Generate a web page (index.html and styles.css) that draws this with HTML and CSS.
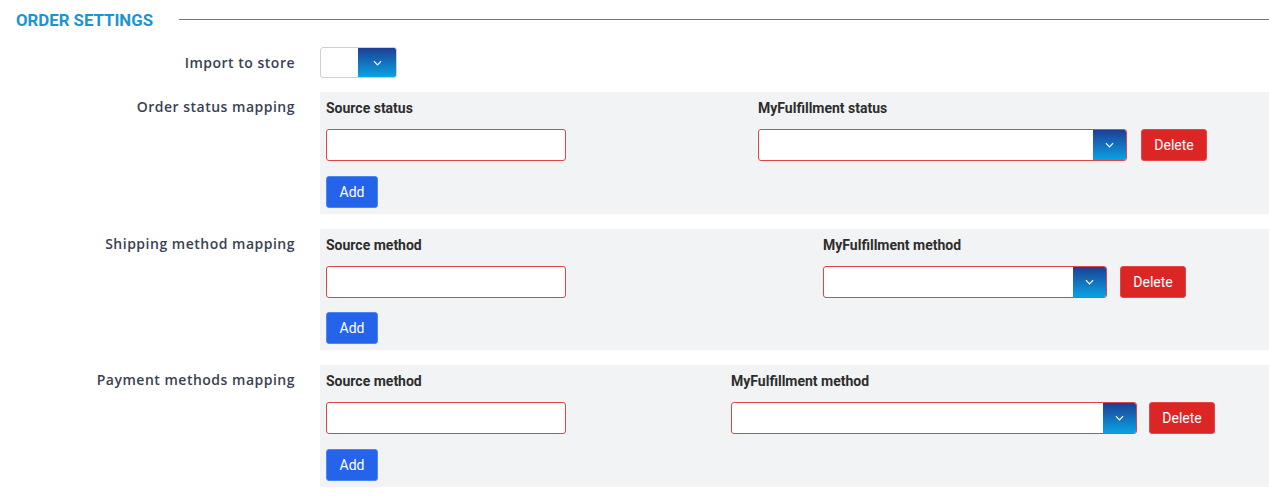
FILE: index.html
```html
<!DOCTYPE html>
<html>
<head>
<meta charset="utf-8">
<link rel="stylesheet" href="styles.css">
</head>
<body>
<div class="page">
  <div class="section-head">
    <span class="section-title">ORDER SETTINGS</span>
    <span class="section-line"></span>
  </div>

  <div class="row row-import">
    <div class="label">Import to store</div>
    <div class="field">
      <div class="select select-small">
        <span class="select-value"></span>
        <span class="select-btn"><svg viewBox="0 0 10 6" width="9" height="6"><path d="M1 1 L5 5 L9 1" fill="none" stroke="#fff" stroke-width="1.3"/></svg></span>
      </div>
    </div>
  </div>

  <div class="row">
    <div class="label label-top">Order status mapping</div>
    <div class="panel panel-status">
      <div class="col-head">Source status</div>
      <div class="col-head">MyFulfillment status</div>
      <div></div>
      <input class="input" type="text">
      <div class="select select-red">
        <span class="select-value"></span>
        <span class="select-btn"><svg viewBox="0 0 10 6" width="9" height="6"><path d="M1 1 L5 5 L9 1" fill="none" stroke="#fff" stroke-width="1.3"/></svg></span>
      </div>
      <button class="btn btn-delete">Delete</button>
      <button class="btn btn-add">Add</button>
    </div>
  </div>

  <div class="row">
    <div class="label label-top">Shipping method mapping</div>
    <div class="panel panel-shipping">
      <div class="col-head">Source method</div>
      <div class="col-head">MyFulfillment method</div>
      <div></div>
      <input class="input" type="text">
      <div class="select select-red">
        <span class="select-value"></span>
        <span class="select-btn"><svg viewBox="0 0 10 6" width="9" height="6"><path d="M1 1 L5 5 L9 1" fill="none" stroke="#fff" stroke-width="1.3"/></svg></span>
      </div>
      <button class="btn btn-delete">Delete</button>
      <button class="btn btn-add">Add</button>
    </div>
  </div>

  <div class="row">
    <div class="label label-top">Payment methods mapping</div>
    <div class="panel panel-payment">
      <div class="col-head">Source method</div>
      <div class="col-head">MyFulfillment method</div>
      <div></div>
      <input class="input" type="text">
      <div class="select select-red">
        <span class="select-value"></span>
        <span class="select-btn"><svg viewBox="0 0 10 6" width="9" height="6"><path d="M1 1 L5 5 L9 1" fill="none" stroke="#fff" stroke-width="1.3"/></svg></span>
      </div>
      <button class="btn btn-delete">Delete</button>
      <button class="btn btn-add">Add</button>
    </div>
  </div>
</div>
</body>
</html>
```

FILE: styles.css
```css
* { box-sizing: border-box; }
html, body { margin: 0; padding: 0; background: #fff; }
body { font-family: Roboto, "Liberation Sans", sans-serif; color: #333; }

.page { padding: 0 0 0 16px; }

.section-head {
  display: flex;
  align-items: center;
  height: 40px;
}
.section-title {
  font-family: Roboto, sans-serif;
  font-weight: 700;
  font-size: 16.8px;
  color: #1a94d2;
  letter-spacing: 0;
  margin-right: 26px;
  position: relative;
  top: 0;
}
.section-line {
  flex: 1;
  height: 1px;
  background: #1a8fc9;
  position: relative;
  top: -1px;
}

.row {
  display: flex;
  align-items: flex-start;
  margin-bottom: 15px;
}
.row-import {
  margin-top: 7px;
  margin-bottom: 14px;
  align-items: center;
}
.label {
  width: 279px;
  flex: none;
  text-align: right;
  margin-right: 25px;
  font-family: "Open Sans", sans-serif;
  font-weight: 600;
  font-size: 14px;
  letter-spacing: 0.5px;
  color: #3a4152;
  line-height: 20px;
}
.label-top { padding-top: 5px; }

.select {
  display: flex;
  height: 32px;
  border: 1px solid #cfcfcf;
  border-radius: 3px;
  background: #fff;
  overflow: hidden;
}
.select-small { width: 77px; height: 31px; }
.select-value { flex: 1; }
.select-btn {
  width: 38px;
  flex: none;
  display: flex;
  align-items: center;
  justify-content: center;
  background: linear-gradient(to bottom, #1c3f95, #0aa2e4);
}
.select-red { border-color: #e04545; }
.select-red .select-btn { width: 33px; }

.panel {
  flex: 1;
  background: #f2f3f5;
  padding: 6px;
  display: grid;
  align-items: center;
}
.panel-status { grid-template-columns: 432px 369px 66px; }
.panel-status .btn-delete { margin-left: 14px; }
.panel-shipping { grid-template-columns: 497px 284px 66px; }
.panel-shipping .btn-delete { margin-left: 13px; }
.panel-payment { grid-template-columns: 405px 406px 66px; }
.panel-payment .btn-delete { margin-left: 12px; }

.col-head {
  font-family: Roboto, sans-serif;
  font-weight: 700;
  font-size: 14px;
  line-height: 20px;
  color: #2d2d2d;
  margin-bottom: 11px;
  white-space: nowrap;
}

.input {
  width: 240px;
  height: 32px;
  border: 1px solid #e04545;
  border-radius: 3px;
  background: #fff;
  padding: 0 8px;
  font-size: 14px;
  outline: none;
  margin: 0;
}

.btn {
  font-family: Roboto, sans-serif;
  font-size: 14px;
  color: #fff;
  height: 32px;
  border-radius: 3px;
  padding: 0;
  cursor: pointer;
  margin: 0;
}
.btn-delete {
  width: 66px;
  background: #dc2626;
  border: 1px solid #e2474a;
  justify-self: start;
}
.btn-add {
  width: 52px;
  background: #2563eb;
  border: 1px solid #4d86f0;
  margin-top: 14.5px;
  justify-self: start;
}
```
